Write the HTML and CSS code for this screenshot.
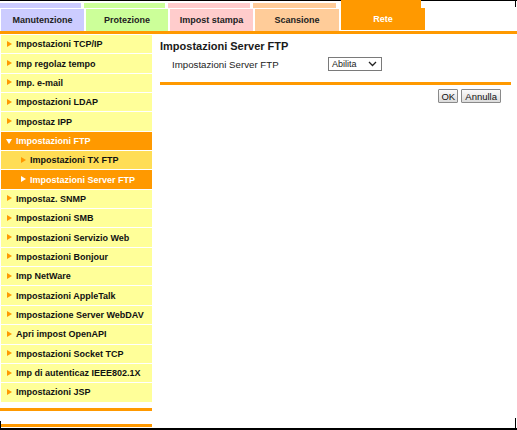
FILE: index.html
```html
<!doctype html>
<html>
<head>
    <meta charset='utf-8'>
    <title>Impostazioni Server FTP</title>
    <link rel="stylesheet" href="styles.css">
</head>
<body>
<div class='frame'>
    <div class='tabs'>
        <div class='tab tab-maint'><div class='tab-top'></div><div class='tab-body'>Manutenzione</div></div>
        <div class='tab tab-prot'><div class='tab-top'></div><div class='tab-body'>Protezione</div></div>
        <div class='tab tab-print'><div class='tab-top'></div><div class='tab-body'>Impost stampa</div></div>
        <div class='tab tab-scan'><div class='tab-top'></div><div class='tab-body'>Scansione</div></div>
        <div class='tab tab-net active'><div class='tab-top'></div><div class='tab-body'>Rete</div></div>
    </div>
    <div class='tabline'></div>

    <div class='main'>
        <div class='side'>
            <ul class='menu'>
                <li class='item'>Impostazioni TCP/IP</li>
                <li class='item'>Imp regolaz tempo</li>
                <li class='item'>Imp. e-mail</li>
                <li class='item'>Impostazioni LDAP</li>
                <li class='item'>Impostaz IPP</li>
                <li class='item open'>Impostazioni FTP</li>
                <li class='item sub'>Impostazioni TX FTP</li>
                <li class='item sub current'>Impostazioni Server FTP</li>
                <li class='item'>Impostaz. SNMP</li>
                <li class='item'>Impostazioni SMB</li>
                <li class='item'>Impostazioni Servizio Web</li>
                <li class='item'>Impostazioni Bonjour</li>
                <li class='item'>Imp NetWare</li>
                <li class='item'>Impostazioni AppleTalk</li>
                <li class='item'>Impostazione Server WebDAV</li>
                <li class='item'>Apri impost OpenAPI</li>
                <li class='item'>Impostazioni Socket TCP</li>
                <li class='item'>Imp di autenticaz IEEE802.1X</li>
                <li class='item'>Impostazioni JSP</li>
            </ul>
            <div class='side-line'></div>
            <div class='side-line low'></div>
        </div>

        <div class='content'>
            <h1 class='title'>Impostazioni Server FTP</h1>
            <div class='row'>
                <span class='label'>Impostazioni Server FTP</span>
                <div class='select'>
                    <span>Abilita</span>
                    <svg width='9' height='6' viewBox='0 0 9 6'><polyline points='1,1 4.5,4.5 8,1' fill='none' stroke='#222' stroke-width='1.3'/></svg>
                </div>
            </div>
            <div class='rule'></div>
            <div class='buttons'>
                <button class='btn btn-ok'>OK</button>
                <button class='btn'>Annulla</button>
            </div>
        </div>
    </div>
</div>
</body>
</html>
```

FILE: styles.css
```css
*{margin:0;padding:0;box-sizing:border-box;}
body{margin:0;background:#fff;font-family:"Liberation Sans",Arial,sans-serif;color:#1a1a1a;}
.frame{position:relative;width:517px;height:430px;border-bottom:2px solid #000;display:flex;flex-direction:column;}
/* bits of the window edge that show at the corners */
.frame:before{content:'';position:absolute;right:1px;top:0;width:1px;height:7px;background:#000;}
.frame:after{content:'';position:absolute;right:1px;bottom:0;width:1px;height:10px;background:#000;}
.main:after{content:'';position:absolute;left:0;bottom:0;width:1px;height:7px;background:#000;}

.tabs{display:flex;gap:2px;padding:2px 0 0 1px;border-top:1px solid #000;height:31px;}
.tab{display:flex;flex-direction:column;width:83px;}
.tab-prot{width:82px;}
.tab-scan,.tab-net{width:84px;}
.tab-top{height:5px;margin:0 3px 0 -2px;}
.tab-body{margin-top:1px;height:22px;display:flex;align-items:center;justify-content:center;font-size:9px;font-weight:bold;color:#222;}
.tab-maint .tab-top,.tab-maint .tab-body{background:#ccccff;}
.tab-prot .tab-top,.tab-prot .tab-body{background:#ccff99;}
.tab-print .tab-top,.tab-print .tab-body{background:#ffcccc;}
.tab-scan .tab-top,.tab-scan .tab-body{background:#ffcc99;}
.tab.active{margin-top:-3px;}
.tab.active .tab-top{height:8px;margin:0 4px 0 0;background:#ff9900;}
.tab.active .tab-body{margin-top:0;height:22px;padding-bottom:1px;background:#ff9900;color:#fff;}

.tabline{height:3px;background:#ff9900;margin-bottom:1px;}

.main{position:relative;flex:1;display:flex;}
.side{width:152px;display:flex;flex-direction:column;}
.menu{list-style:none;padding-left:1px;}
.item{position:relative;height:18.35px;margin-bottom:1px;background:#ffff99;padding-left:15px;display:flex;align-items:center;font-size:9px;font-weight:bold;color:#111;white-space:nowrap;}
.item:before{content:'';position:absolute;left:6px;top:50%;margin-top:-3.5px;border-style:solid;border-width:3.5px 0 3.5px 5px;border-color:transparent transparent transparent #ff9900;}
.item.sub{padding-left:29px;background:#ffdd55;}
.item.sub:before{left:20px;}
.item.open,.item.current{background:#ff9900;color:#fff;}
.item.open:before{margin-top:-2px;left:5px;border-width:5px 3.5px 0 3.5px;border-color:#fff transparent transparent transparent;}
.item.current:before{border-left-color:#fff;}
.side-line{height:3px;background:#ff9900;margin-top:5px;}
.side-line.low{margin-top:13px;}

.content{flex:1;padding:5px 6px 0 8px;}
.title{font-size:11px;font-weight:bold;line-height:13px;color:#1a1a1a;}
.row{display:flex;align-items:center;margin-top:4px;height:14px;padding-left:12px;}
.label{width:156px;font-size:9.7px;color:#222;}
.select{width:54px;height:14px;border:1px solid #7a7a7a;display:flex;align-items:center;justify-content:space-between;padding:0 4px 0 3px;font-size:9px;color:#222;background:#fff;}
.rule{height:3px;background:#ff9900;margin-top:11px;}
.buttons{display:flex;justify-content:flex-end;gap:3px;margin-top:4px;padding-right:10px;}
.btn{height:14px;padding:0 3px;font-family:"Liberation Sans",Arial,sans-serif;font-size:9.5px;color:#111;border:1px solid #8a8a8a;border-radius:1px;background:linear-gradient(#fbfbfb,#dcdcdc);}
.btn-ok{width:20px;padding:0;}
```
